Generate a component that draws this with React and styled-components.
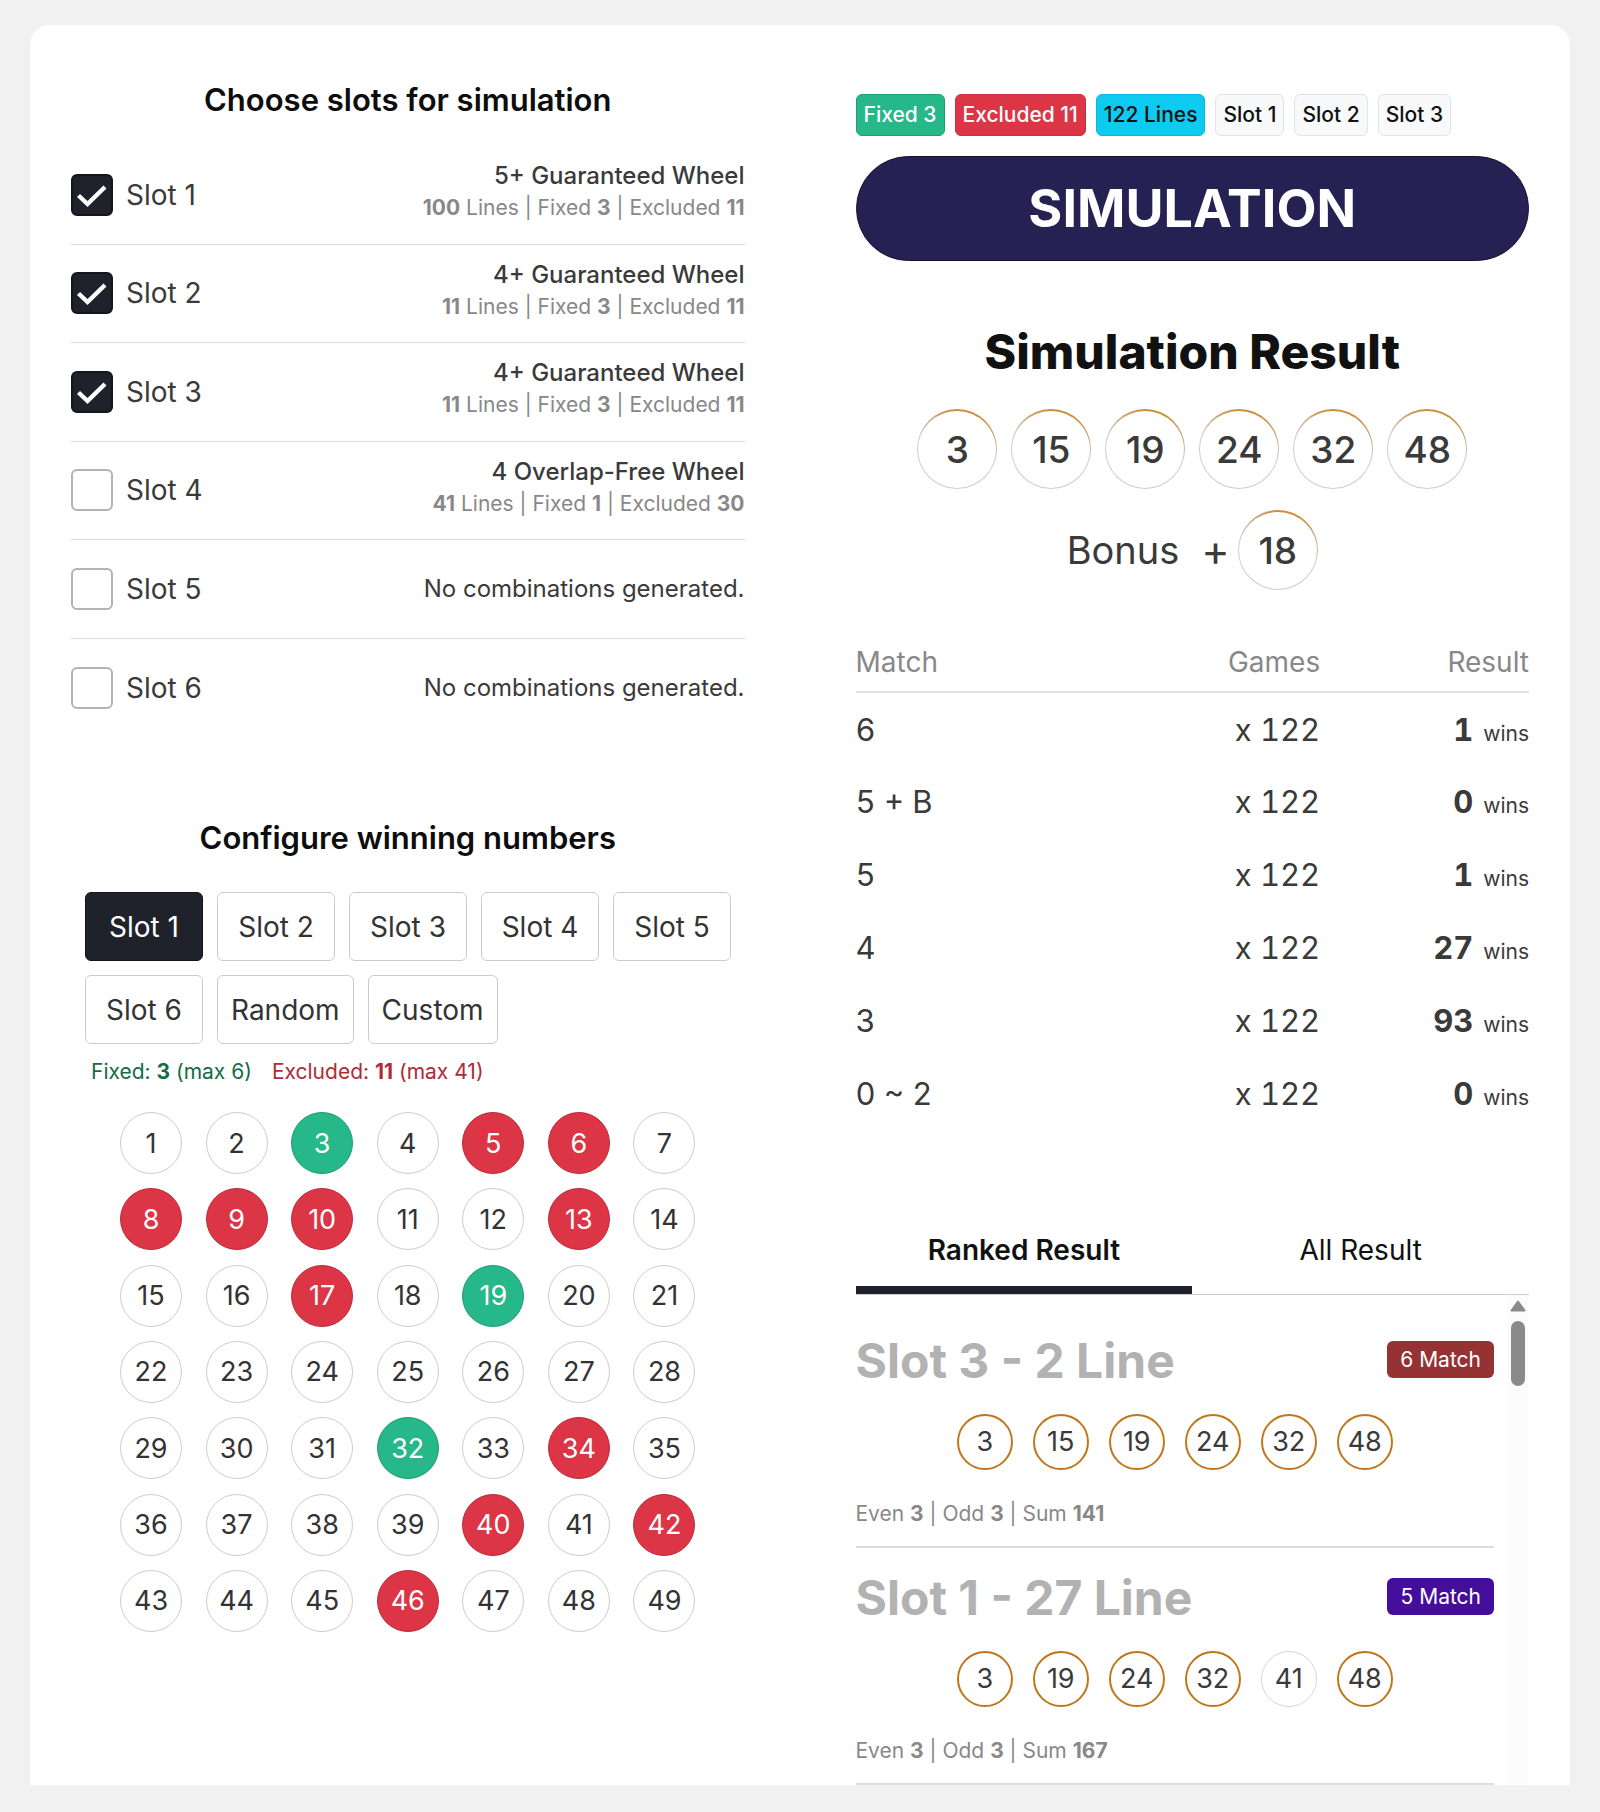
import React, { useState } from 'react';
import styled, { createGlobalStyle, css } from 'styled-components';

const GlobalStyle = createGlobalStyle`
  *, *::before, *::after { box-sizing: border-box; }
  body {
    margin: 0;
    background: #f1f1f1;
    color: #3a3a3a;
    font-family: Inter, "Liberation Sans", sans-serif;
  }
  h1, h2, h3, p, ul { margin: 0; padding: 0; }
  ul { list-style: none; }
  button, input { font-family: inherit; }
`;

const Page = styled.div`
  min-height: 100vh;
  padding: 25px 30px 26px;
`;

const Card = styled.main`
  display: grid;
  grid-template-columns: 1fr 1fr;
  column-gap: 111px;
  padding: 0 41px;
  background: #fff;
  border-radius: 20px 20px 0 0;
`;

const Column = styled.section`
  min-width: 0;
  padding-top: ${(p) => p.$top}px;
`;

const Heading = styled.h2`
  color: #0d0d0d;
  font-size: 31px;
  line-height: 40px;
  font-weight: 600;
  text-align: center;
`;

const SlotList = styled.ul`
  display: grid;
  grid-auto-rows: 1fr;
  min-height: 591px;
  margin: 26px 0 81px;
`;

const SlotRow = styled.li`
  display: flex;
  align-items: center;
  justify-content: space-between;
  border-bottom: 1px solid #dcdcdc;
  &:last-child { border-bottom: 0; }
`;

const SlotLabel = styled.label`
  display: flex;
  align-items: center;
  gap: 13px;
  font-size: 28px;
  line-height: 42px;
`;

const CheckWrap = styled.span`
  display: grid;
  width: 42px;
  height: 42px;
  & > * { grid-area: 1 / 1; }
  svg { pointer-events: none; }
`;

const Check = styled.input`
  appearance: none;
  width: 42px;
  height: 42px;
  margin: 0;
  background: #fff;
  border: 2px solid #b3b3b3;
  border-radius: 6px;
  &:checked {
    background: #1f222b;
    border-color: #14161c;
  }
`;

const SlotInfo = styled.div`
  padding-bottom: ${(p) => (p.$detailed ? 5 : 0)}px;
  text-align: right;
`;

const WheelName = styled.p`
  font-size: 24px;
  line-height: 32px;
  font-weight: ${(p) => (p.$strong ? 500 : 400)};
`;

const Stats = styled.p`
  color: #888;
  font-size: 21px;
  line-height: 32px;
`;

const ButtonRow = styled.div`
  display: flex;
  flex-wrap: wrap;
  gap: 14px;
  margin-top: 34px;
  padding-left: 14px;
`;

const SourceButton = styled.button`
  min-width: 118px;
  height: 69px;
  padding: 0 13px;
  color: ${(p) => (p.$active ? '#fff' : '#333')};
  background: ${(p) => (p.$active ? '#1f222b' : '#fff')};
  border: 1px solid ${(p) => (p.$active ? '#14161c' : '#ccc')};
  border-radius: 6px;
  font-size: 28px;
`;

const Limits = styled.p`
  display: flex;
  gap: 20px;
  margin-top: 13px;
  padding-left: 20px;
  font-size: 21px;
  line-height: 30px;
`;

const Limit = styled.span`
  color: ${(p) => p.$color};
`;

const NumberGrid = styled.div`
  display: grid;
  grid-template-columns: repeat(7, 62px);
  justify-content: space-between;
  align-content: space-between;
  min-height: 520px;
  margin-top: 25px;
  padding: 0 49px;
`;

const tones = {
  fixed: css`
    color: #fff;
    background: #26b888;
    border-color: #209c74;
  `,
  excluded: css`
    color: #fff;
    background: #dc3545;
    border-color: #bb2d3b;
  `,
};

const NumberButton = styled.button`
  width: 62px;
  height: 62px;
  padding: 0;
  color: #333;
  background: #fff;
  border: 1px solid #ccc;
  border-radius: 50%;
  font-size: 27px;
  ${(p) => tones[p.$tone]}
`;

const Tags = styled.div`
  display: flex;
  flex-wrap: wrap;
  gap: 10px;
`;

const Tag = styled.span`
  height: 42px;
  padding: 0 7px;
  color: ${(p) => p.$color};
  background: ${(p) => p.$bg};
  border: 1px solid ${(p) => p.$edge};
  border-radius: 6px;
  font-size: 21px;
  line-height: 40px;
  font-weight: 500;
`;

const RunButton = styled.button`
  display: block;
  width: 100%;
  height: 105px;
  margin: 20px 0 66px;
  color: #fff;
  background: #262153;
  border: 1px solid #15122e;
  border-radius: 53px;
  font-size: 52px;
  font-weight: 700;
`;

const ResultHeading = styled.h1`
  color: #111;
  font-size: 48px;
  line-height: 50px;
  font-weight: 800;
  text-align: center;
`;

const BallRow = styled.div`
  display: flex;
  justify-content: center;
  align-items: center;
  gap: ${(p) => p.$gap}px;
  margin-top: ${(p) => p.$top}px;
`;

const BigBall = styled.span`
  width: 80px;
  height: 80px;
  border: 1px solid transparent;
  border-top-width: 2px;
  border-radius: 50%;
  background:
    linear-gradient(#fff, #fff) padding-box,
    linear-gradient(200deg, #cc8f40 15%, #ccc 48%) border-box;
  font-size: 37px;
  line-height: 77px;
  font-weight: 500;
  text-align: center;
`;

const BonusLabel = styled.span`
  margin-right: 14px;
  font-size: 38px;
`;

const BonusPlus = styled.span`
  font-size: 43px;
`;

const Table = styled.table`
  width: 100%;
  margin-top: 50px;
  border-collapse: collapse;
  font-variant-numeric: tabular-nums;
  th, td { padding: 0; text-align: right; }
  th:first-child, td:first-child { text-align: left; }
  th {
    height: 52px;
    padding-bottom: 8px;
    color: #888;
    border-bottom: 2px solid #e2e2e2;
    font-size: 28px;
    font-weight: 400;
  }
  td {
    height: 73px;
    font-size: 31px;
  }
  th:nth-child(2), td:nth-child(2) { width: 40%; }
  th:last-child, td:last-child { width: 31%; }
`;

const Wins = styled.span`
  margin-left: 10px;
  font-size: 21px;
`;

const Tabs = styled.div`
  display: flex;
  margin-top: 83px;
  border-bottom: 1px solid #ccc;
`;

const Tab = styled.button`
  flex: 1;
  height: 81px;
  padding: 0;
  color: #111;
  background: none;
  border: 0;
  border-bottom: 8px solid ${(p) => (p.$active ? '#1f222b' : 'transparent')};
  font-size: 28px;
  font-weight: ${(p) => (p.$active ? 600 : 400)};
`;

const Scroller = styled.div`
  display: flex;
  gap: 13px;
`;

const Results = styled.ul`
  flex: 1;
  && { padding-top: 16px; }
`;

const ResultItem = styled.li`
  padding-top: 16px;
  border-bottom: 2px solid #dcdcdc;
`;

const ResultTop = styled.div`
  display: flex;
  align-items: flex-end;
  justify-content: space-between;
  height: 64px;
`;

const ResultName = styled.h3`
  color: #b2b2b2;
  font-size: 48px;
  line-height: 60px;
  font-weight: 700;
`;

const MatchTag = styled.span`
  align-self: center;
  padding: 0 13px;
  color: #fff;
  background: ${(p) => p.$bg};
  border-radius: 6px;
  font-size: 21px;
  line-height: 37px;
`;

const Ball = styled.span`
  width: 56px;
  height: 56px;
  border: ${(p) => (p.$hit ? '2px solid #c0771a' : '1px solid #d6d6d6')};
  border-radius: 50%;
  font-size: 27px;
  line-height: ${(p) => (p.$hit ? 52 : 54)}px;
  text-align: center;
`;

const ItemStats = styled(Stats)`
  && {
    margin-top: 28px;
    padding-bottom: 16px;
  }
`;

const Scrollbar = styled.div`
  display: flex;
  flex-direction: column;
  align-items: center;
  gap: 9px;
  width: 22px;
  padding-top: 5px;
  background: #fcfcfc;
`;

const Thumb = styled.div`
  width: 14px;
  height: 65px;
  background: #8a8a8a;
  border-radius: 7px;
`;

const slots = [
  { name: 'Slot 1', wheel: '5+ Guaranteed Wheel', lines: 100, fixed: 3, excluded: 11, on: true },
  { name: 'Slot 2', wheel: '4+ Guaranteed Wheel', lines: 11, fixed: 3, excluded: 11, on: true },
  { name: 'Slot 3', wheel: '4+ Guaranteed Wheel', lines: 11, fixed: 3, excluded: 11, on: true },
  { name: 'Slot 4', wheel: '4 Overlap-Free Wheel', lines: 41, fixed: 1, excluded: 30, on: false },
  { name: 'Slot 5', on: false },
  { name: 'Slot 6', on: false },
];

const sources = ['Slot 1', 'Slot 2', 'Slot 3', 'Slot 4', 'Slot 5', 'Slot 6', 'Random', 'Custom'];
const fixedNumbers = [3, 19, 32];
const excludedNumbers = [5, 6, 8, 9, 10, 13, 17, 34, 40, 42, 46];
const numbers = Array.from({ length: 49 }, (_, i) => i + 1);
const toneOf = (n) =>
  fixedNumbers.includes(n) ? 'fixed' : excludedNumbers.includes(n) ? 'excluded' : 'plain';

const tags = [
  { text: 'Fixed 3', color: '#fff', bg: '#26b888', edge: '#209c74' },
  { text: 'Excluded 11', color: '#fff', bg: '#dc3545', edge: '#c9303f' },
  { text: '122 Lines', color: '#111', bg: '#0dcaf0', edge: '#0cb6d8' },
  { text: 'Slot 1', color: '#111', bg: '#f8f9fa', edge: '#e2e3e5' },
  { text: 'Slot 2', color: '#111', bg: '#f8f9fa', edge: '#e2e3e5' },
  { text: 'Slot 3', color: '#111', bg: '#f8f9fa', edge: '#e2e3e5' },
];

const winning = [3, 15, 19, 24, 32, 48];

const matches = [
  ['6', 1],
  ['5 + B', 0],
  ['5', 1],
  ['4', 27],
  ['3', 93],
  ['0 ~ 2', 0],
];

const results = [
  { name: 'Slot 3 - 2 Line', match: '6 Match', bg: '#963234', balls: [3, 15, 19, 24, 32, 48], sum: 141 },
  { name: 'Slot 1 - 27 Line', match: '5 Match', bg: '#450d9c', balls: [3, 19, 24, 32, 41, 48], sum: 167 },
];

function SlotPicker() {
  const [checked, setChecked] = useState(slots.map((s) => s.on));
  const toggle = (i) => setChecked(checked.map((on, k) => (k === i ? !on : on)));
  return (
    <SlotList>
      {slots.map((slot, i) => (
        <SlotRow key={slot.name}>
          <SlotLabel>
            <CheckWrap>
              <Check type="checkbox" checked={checked[i]} onChange={() => toggle(i)} />
              {checked[i] && (
                <svg width="42" height="42" viewBox="0 0 42 42" fill="none" aria-hidden="true">
                  <path d="M7.5 21.5L16.5 30L34 13" stroke="#fff" strokeWidth="4.4" />
                </svg>
              )}
            </CheckWrap>
            {slot.name}
          </SlotLabel>
          <SlotInfo $detailed={Boolean(slot.wheel)}>
            {slot.wheel ? (
              <>
                <WheelName $strong>{slot.wheel}</WheelName>
                <Stats>
                  <b>{slot.lines}</b> Lines | Fixed <b>{slot.fixed}</b> | Excluded <b>{slot.excluded}</b>
                </Stats>
              </>
            ) : (
              <WheelName>No combinations generated.</WheelName>
            )}
          </SlotInfo>
        </SlotRow>
      ))}
    </SlotList>
  );
}

export default function App() {
  const [source, setSource] = useState('Slot 1');
  const [tab, setTab] = useState('Ranked Result');
  return (
    <Page>
      <GlobalStyle />
      <Card>
        <Column $top={55}>
          <Heading>Choose slots for simulation</Heading>
          <SlotPicker />
          <Heading>Configure winning numbers</Heading>
          <ButtonRow>
            {sources.map((name) => (
              <SourceButton key={name} type="button" $active={name === source} onClick={() => setSource(name)}>
                {name}
              </SourceButton>
            ))}
          </ButtonRow>
          <Limits>
            <Limit $color="#146c43">
              Fixed: <b>3</b> (max 6)
            </Limit>
            <Limit $color="#b02a37">
              Excluded: <b>11</b> (max 41)
            </Limit>
          </Limits>
          <NumberGrid>
            {numbers.map((n) => (
              <NumberButton key={n} type="button" $tone={toneOf(n)}>
                {n}
              </NumberButton>
            ))}
          </NumberGrid>
        </Column>

        <Column $top={69}>
          <Tags>
            {tags.map((t) => (
              <Tag key={t.text} $color={t.color} $bg={t.bg} $edge={t.edge}>
                {t.text}
              </Tag>
            ))}
          </Tags>
          <RunButton type="button">SIMULATION</RunButton>
          <ResultHeading>Simulation Result</ResultHeading>
          <BallRow $gap={14} $top={32}>
            {winning.map((n) => (
              <BigBall key={n}>{n}</BigBall>
            ))}
          </BallRow>
          <BallRow $gap={8} $top={21}>
            <BonusLabel>Bonus</BonusLabel>
            <BonusPlus>+</BonusPlus>
            <BigBall>18</BigBall>
          </BallRow>
          <Table>
            <thead>
              <tr>
                <th>Match</th>
                <th>Games</th>
                <th>Result</th>
              </tr>
            </thead>
            <tbody>
              {matches.map(([name, wins]) => (
                <tr key={name}>
                  <td>{name}</td>
                  <td>x 122</td>
                  <td>
                    <b>{wins}</b>
                    <Wins>wins</Wins>
                  </td>
                </tr>
              ))}
            </tbody>
          </Table>
          <Tabs role="tablist">
            {['Ranked Result', 'All Result'].map((name) => (
              <Tab
                key={name}
                type="button"
                role="tab"
                aria-selected={name === tab}
                $active={name === tab}
                onClick={() => setTab(name)}
              >
                {name}
              </Tab>
            ))}
          </Tabs>
          <Scroller>
            <Results>
              {results.map((r) => (
                <ResultItem key={r.name}>
                  <ResultTop>
                    <ResultName>{r.name}</ResultName>
                    <MatchTag $bg={r.bg}>{r.match}</MatchTag>
                  </ResultTop>
                  <BallRow $gap={20} $top={23}>
                    {r.balls.map((n) => (
                      <Ball key={n} $hit={winning.includes(n)}>
                        {n}
                      </Ball>
                    ))}
                  </BallRow>
                  <ItemStats>
                    Even <b>3</b> | Odd <b>3</b> | Sum <b>{r.sum}</b>
                  </ItemStats>
                </ResultItem>
              ))}
            </Results>
            <Scrollbar aria-hidden="true">
              <svg width="16" height="12" viewBox="0 0 16 12">
                <path d="M8 1.5L14.5 10.5H1.5Z" fill="#8a8a8a" stroke="#8a8a8a" strokeWidth="2" strokeLinejoin="round" />
              </svg>
              <Thumb />
            </Scrollbar>
          </Scroller>
        </Column>
      </Card>
    </Page>
  );
}
